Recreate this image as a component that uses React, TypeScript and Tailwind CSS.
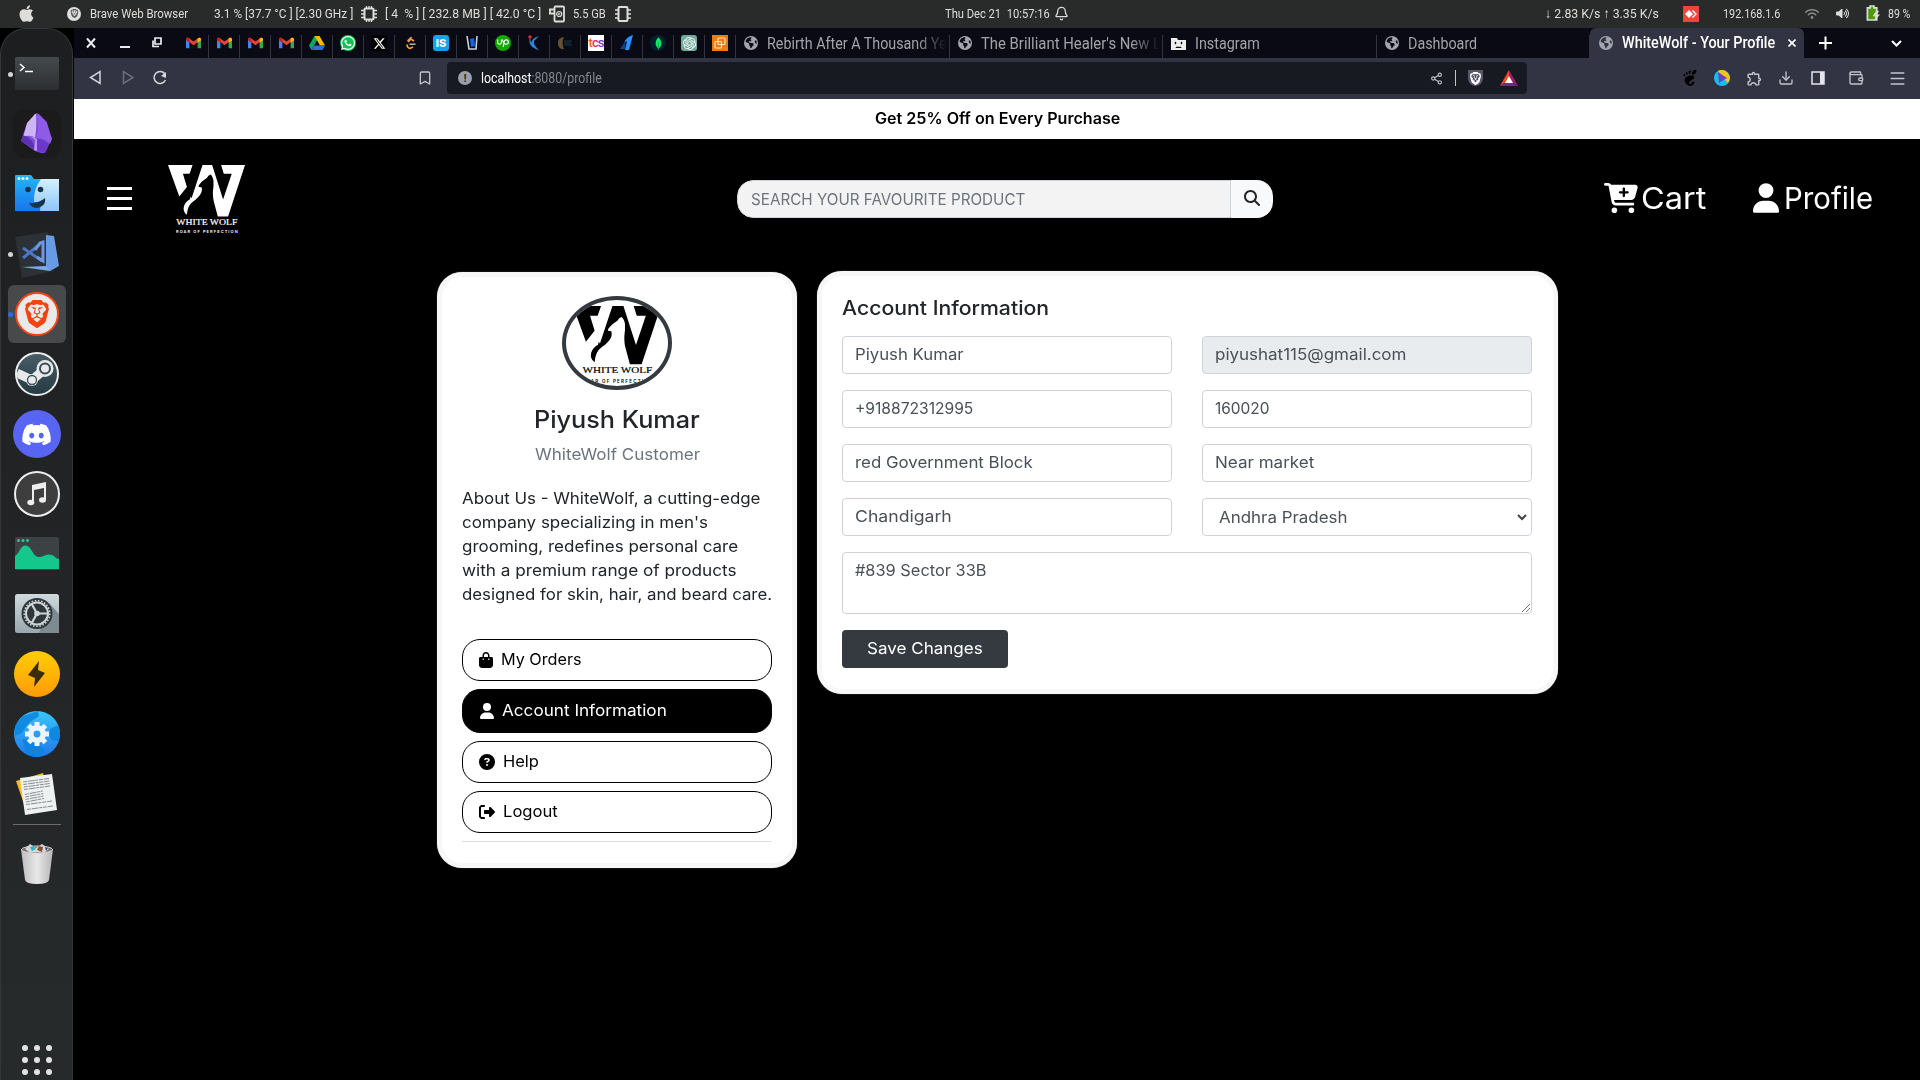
import React, { useLayoutEffect, useRef, useState } from "react";
import {
  FaApple, FaCartPlus, FaUser, FaBagShopping, FaCircleQuestion, FaRightFromBracket,
  FaMagnifyingGlass, FaEarthAmericas, FaWhatsapp, FaDiscord, FaXTwitter, FaUpwork, FaVolumeHigh, FaWifi,
} from "react-icons/fa6";
import { SiBrave, SiMongodb, SiOpenai, SiGnome } from "react-icons/si";
import { MdOutlineExtension } from "react-icons/md";
import { Share2, Download, Wallet, Menu, Bookmark, Bell } from "lucide-react";

type Kids = { children: React.ReactNode };

/* Text condensed or stretched to fill the width of its box. */
function Fit({ children, className = "" }: Kids & { className?: string }) {
  const box = useRef<HTMLSpanElement>(null);
  const text = useRef<HTMLSpanElement>(null);
  const [scale, setScale] = useState(1);
  useLayoutEffect(() => {
    if (box.current && text.current) setScale(box.current.clientWidth / text.current.offsetWidth);
  }, []);
  return (
    <span ref={box} className={`block shrink-0 whitespace-pre ${className}`}>
      <span ref={text} className="block w-max origin-left" style={{ transform: `scaleX(${scale})` }}>{children}</span>
    </span>
  );
}

function WolfLogo({ className = "" }: { className?: string }) {
  return (
    <svg viewBox="293 225 232 208" preserveAspectRatio="none" className={className} fill="currentColor">
      <path d="M293 225H367L358 251H338L350 291L327 320Z" />
      <path d="M397 225H426L459 329L485 251H461L453 225H525L474 380H443L431 335Q426 315 430 290V272Q427 258 421 254Q414 256 410 264Q398 271 390 281Q383 289 386 291L394 292Q398 303 389 316Q380 328 366 337Q352 347 350 375Q337 366 341 349Q345 336 359 328L361 320L364 325Z" />
      <text x="318" y="405" fontSize="23" fontWeight="400" stroke="currentColor" strokeWidth=".5" fontFamily="Liberation Serif, serif" textLength="184" lengthAdjust="spacingAndGlyphs">WHITE WOLF</text>
      <text x="317" y="431" fontSize="12" fontWeight="600" fontFamily="Inter, sans-serif" textLength="186">ROAR OF PERFECTION</text>
    </svg>
  );
}

function Chip({ gpu = false, ram = false }: { gpu?: boolean; ram?: boolean }) {
  return (
    <svg viewBox="0 0 16 18" className="h-[18px] w-4" fill="none" stroke="#deddda" strokeWidth="2">
      {gpu ? (
        <>
          <path d="M5.500 2.500Q5.500 1.500 6.500 1.500H14Q15 1.500 15 2.500V15.500Q15 16.500 14 16.500H6.500Q5.500 16.500 5.500 15.500ZM0 4.500h5M0 8.500h5M1 4v5" strokeWidth="1.800" />
          <circle cx="10.200" cy="9" r="2.500" strokeWidth="1.200" />
          <circle cx="10.200" cy="9" r=".8" strokeWidth="1" />
        </>
      ) : ram ? (
        <>
          <rect x="3.500" y="2" width="9" height="14" rx="1" />
          <path d="M0 5h3M0 9h3M0 13h3M13 5h3M13 9h3M13 13h3" strokeWidth="1.400" />
        </>
      ) : (
        <>
          <rect x="3.500" y="3.500" width="9" height="11" rx="1" />
          <path d="M0 5.500h3M0 9h3M0 12.500h3M13 5.500h3M13 9h3M13 12.500h3M5.500 1v2M8 1v2M10.500 1v2M5.500 15v2M8 15v2M10.500 15v2" strokeWidth="1.300" />
        </>
      )}
    </svg>
  );
}

function SystemBar() {
  return (
    <header className="flex h-7 w-full shrink-0 items-center bg-[#292a2a] pb-px font-[Roboto,sans-serif] text-[13.5px] leading-[27px] text-[#deddda]">
      <FaApple className="ml-[17px] size-[19px]" />
      <span className="ml-[31px] flex size-[14px] items-center justify-center rounded-full bg-[#dedede] text-[#555]"><SiBrave className="size-[9px]" /></span>
      <Fit className="ml-[9px] w-[98px]">Brave Web Browser</Fit>
      <Fit className="ml-[26px] w-[139px]">3.1 % [37.7 °C ] [2.30 GHz ]</Fit>
      <span className="ml-2"><Chip /></span>
      <Fit className="ml-2 w-[156px]">[ 4  % ] [ 232.8 MB ] [ 42.0 °C ]</Fit>
      <span className="ml-2"><Chip gpu /></span>
      <Fit className="ml-2 w-[33px]">5.5 GB</Fit>
      <span className="ml-[9px]"><Chip ram /></span>
      <Fit className="ml-[314px] w-[105px]">Thu Dec 21  10:57:16</Fit>
      <Bell className="ml-[4px] size-[15px]" strokeWidth={2} />
      <Fit className="ml-auto w-[114px]">↓ 2.83 K/s ↑ 3.35 K/s</Fit>
      <svg viewBox="0 0 16 16" className="ml-6 size-4"><path fill="#ef443b" d="M0 0h16v16H0z" /><path fill="#fff" d="m6 4 4 4-4 4-4-4zM10 4l4 4-4 4-1-1 3-3-3-3z" /></svg>
      <Fit className="ml-6 w-[57px]">192.168.1.6</Fit>
      <FaWifi className="ml-[25px] size-[14px] text-[#8d8d8b]" />
      <FaVolumeHigh className="ml-[17px] size-[13px]" />
      <svg viewBox="0 0 15 18" className="ml-[17px] h-[17px] w-[14px]"><path d="M4.500 1h4v2h3v13h-10V3h3z" fill="#4e9a06" stroke="#deddda" strokeWidth="1.800" /><path d="m11 6-4 6h3l-1 5 6-7h-3l2-4z" fill="#deddda" /></svg>
      <Fit className="mr-[10px] ml-2 w-[22px]">89 %</Fit>
    </header>
  );
}

function DockSlot({ children, dot = "", active = false }: Kids & { dot?: string; active?: boolean }) {
  return (
    <div className="relative flex h-[60px] w-full shrink-0 items-center justify-center">
      <div className={`flex size-[58px] items-center justify-center rounded-md ${active ? "bg-[#48494a]" : ""}`}>{children}</div>
      {dot && <span className={`absolute left-[7px] size-[5px] rounded-full ${dot}`} />}
    </div>
  );
}

function Dock() {
  return (
    <nav className="flex w-[73px] shrink-0 flex-col items-center rounded-t-[26px] border border-b-0 border-[#343637] bg-linear-to-b from-[#1d1e1f] via-[#222425] to-[#272a2b] pt-[15px]">
      <DockSlot dot="bg-[#d4d4d4]">
        <svg viewBox="0 0 44 34" className="h-[34px] w-11"><defs><linearGradient id="term" x2="0" y2="1"><stop stopColor="#454a4c" /><stop offset="1" stopColor="#2b2f31" /></linearGradient></defs><rect width="44" height="33" rx="1.500" fill="url(#term)" /><path d="m5 7 4 3.500L5 14M10 14.500h8" stroke="#fff" strokeWidth="1.500" fill="none" /></svg>
      </DockSlot>
      <DockSlot>
        <svg viewBox="0 0 48 48" className="size-12">
          <rect width="48" height="48" rx="11" fill="#1b1b1b" />
          <path d="M22 4Q25 2 28 6L34 12Q34 20 36 25L39 28 33 41Q32 44 28 43L22 41 8 31 13 16Z" fill="#7c4bd2" />
          <path d="M22 4 14 13Q12 21 10 27Q18 24 22 28Q24 17 23 4Z" fill="#cdb4f5" />
          <path d="M23 4Q27 15 23 28Q31 28 37 34L39 29 34 13 27 6Z" fill="#8e5be8" />
          <path d="M10 25Q21 29 22 40L8 31Z" fill="#5d31b5" />
          <path d="M22 29Q30 28 36 34L32 43 21 40Z" fill="#6d38c9" />
          <path d="M10 25Q17 25 22 30L21 40 24 41 24 29Q16 25 10 25Z" fill="#b896ee" />
        </svg>
      </DockSlot>
      <DockSlot>
        <svg viewBox="0 0 44 37" className="-mt-px h-[37px] w-11">
          <defs><linearGradient id="files" x2="0" y2="1"><stop stopColor="#22b6f7" /><stop offset="1" stopColor="#1a74ee" /></linearGradient><linearGradient id="filesR" x2="0" y2="1"><stop stopColor="#d4effd" /><stop offset="1" stopColor="#8cc6fb" /></linearGradient></defs>
          <path d="M0 1Q0 0 1 0H16L19 4H44V36H0Z" fill="url(#files)" />
          <path d="M26 4H44V36H25Q26 31 25 27H19Q18 15 26 4Z" fill="url(#filesR)" />
          <g fill="#e5f6ff"><circle cx="4" cy="3.500" r="1.500" /><circle cx="8" cy="3.500" r="1.500" /><circle cx="12" cy="3.500" r="1.500" /></g>
          <g fill="#17344b"><circle cx="13" cy="14.500" r="2.800" /><circle cx="25.500" cy="14.500" r="2.800" /><path d="M14 28Q23 29 30 23Q31 28 27 31Q22 35 16 31Z" /></g>
        </svg>
      </DockSlot>
      <DockSlot dot="bg-[#d4d4d4]">
        <svg viewBox="0 0 44 47" className="h-[47px] w-11">
          <path d="M0 6 33 1 39 40 7 47Z" fill="#2c3037" />
          <path d="m31 4 8 1 5 30-9 5-4-2Z" fill="#679be3" /><path d="m7 36 24-1 4 5Z" fill="#79a9ea" />
          <path d="M8 17 27 30M8 27 25 13" stroke="#4a77c3" strokeWidth="3" /><path d="M20 19 25 12 28 11V30L22 26" fill="none" stroke="#6a99df" strokeWidth="3" />
        </svg>
      </DockSlot>
      <DockSlot active dot="bg-[#3465f0]">
        <span className="flex size-11 items-center justify-center rounded-full border-[2.5px] border-[#fb4616] bg-[#e9e9e9]"><SiBrave className="size-7 text-[#f5420f]" /></span>
      </DockSlot>
      <DockSlot>
        <span className="flex size-11 items-center justify-center overflow-hidden rounded-full border-2 border-[#eceded] bg-linear-to-b from-[#475c66] to-[#263b44]">
          <svg viewBox="0 0 40 40" className="size-10"><path d="M0 19 15 26 28 15" stroke="#e9e9e9" strokeWidth="9" fill="none" /><circle cx="28" cy="14.500" r="8.500" fill="#e9e9e9" /><circle cx="28" cy="14.500" r="5" fill="#e9e9e9" stroke="#364d58" strokeWidth="2" /><circle cx="15" cy="26" r="6" fill="#e9e9e9" /><circle cx="15" cy="26" r="4.500" fill="none" stroke="#364d58" strokeWidth="1.300" /></svg>
        </span>
      </DockSlot>
      <DockSlot><span className="flex size-12 items-center justify-center rounded-full bg-[#5865f2]"><FaDiscord className="size-[31px] text-white" /></span></DockSlot>
      <DockSlot>
        <span className="flex size-[46px] items-center justify-center rounded-full border-2 border-[#eee] bg-[#3e3e3e]">
          <svg viewBox="0 0 20 24" className="h-6 w-5" fill="#eee"><path d="M5 3 19 0V18H17V6L7 8V20H5Z" /><ellipse cx="3.800" cy="20.500" rx="3.500" ry="2.700" /><ellipse cx="15.500" cy="18" rx="3.500" ry="2.700" /></svg>
        </span>
      </DockSlot>
      <DockSlot>
        <svg viewBox="0 0 44 33" className="-mt-px h-[33px] w-11"><rect width="44" height="33" rx="1.500" fill="#3c4144" /><path d="M0 19C5 16 5 9 10 8.500C17 8 17 20 24 20C29 20 31 16 37 18C40 19 41 22 44 22V32H0Z" fill="#14c78a" /><g fill="#1ad194"><circle cx="3.500" cy="3.500" r="1.500" /><circle cx="8" cy="3.500" r="1.500" /><circle cx="12.500" cy="3.500" r="1.500" /></g></svg>
      </DockSlot>
      <DockSlot>
        <svg viewBox="0 0 44 39" className="-mt-px h-[39px] w-11"><defs><linearGradient id="set" x2="0" y2="1"><stop stopColor="#cfdade" /><stop offset="1" stopColor="#98a7ad" /></linearGradient></defs><rect width="44" height="39" rx="2.500" fill="url(#set)" /><path d="M34 9 44 20V39H24Z" fill="#7e8b91" /><circle cx="22" cy="19.500" r="15.500" fill="#30363a" /><circle cx="22" cy="19.500" r="11" fill="none" stroke="#ccd6d9" strokeWidth="2" /><circle cx="22" cy="19.500" r="12.800" fill="none" stroke="#ccd6d9" strokeWidth="1.600" strokeDasharray="1.600 1.600" /><path d="m22 19.500 10 0M22 19.500l-5-9M22 19.500l-5 9" stroke="#ccd6d9" strokeWidth="2.200" /><circle cx="22" cy="19.500" r="2.800" fill="#ccd6d9" /></svg>
      </DockSlot>
      <DockSlot><span className="flex size-[46px] items-center justify-center rounded-full bg-linear-to-b from-[#ffce05] to-[#ff9a06]"><svg viewBox="0 0 18 26" className="h-[26px] w-[18px]"><path d="M11 0 0 14 7 17 6 26 17 12 10 9Z" fill="#3a2c0a" /></svg></span></DockSlot>
      <DockSlot>
        <svg viewBox="0 0 46 46" className="size-[46px]"><defs><linearGradient id="globe" x2="0" y2="1"><stop stopColor="#39c8fb" /><stop offset="1" stopColor="#1f75ea" /></linearGradient><clipPath id="gc"><circle cx="23" cy="23" r="23" /></clipPath></defs><g clipPath="url(#gc)"><path fill="url(#globe)" d="M0 0h46v46H0z" /><path fill="#0b84dd" d="M1 13 9 5 24 0 25 5 16 11 11 17 8 22 1 25ZM36 18l10-5v18l-8-2-3-5ZM8 28l12 1 11 10-5 7H14Z" opacity=".85" /></g><path d="M20.500 11h5v4h-5zM20.500 31h5v4h-5zM11 20.500h4v5h-4zM31 20.500h4v5h-4z" fill="#eaf6ff" /><path d="M20.500 11h5v4h-5zM20.500 31h5v4h-5zM11 20.500h4v5h-4zM31 20.500h4v5h-4z" fill="#eaf6ff" transform="rotate(45 23 23)" /><circle cx="23" cy="23" r="6.200" fill="none" stroke="#eaf6ff" strokeWidth="5.500" /></svg>
      </DockSlot>
      <DockSlot>
        <svg viewBox="0 0 44 44" className="size-11"><path d="M1 9 28 1 35 30 11 38Z" fill="#f5bd22" /><path d="M5 6 37 2 42 38 10 43Z" fill="#eef1f2" /><g stroke="#7b8185" strokeWidth=".9" strokeDasharray="4 .8 7 .6 3 .7">{[0, 1, 2, 3, 5, 6, 7, 8, 9, 11].map((i) => <path key={i} d={`M${8 + i * 0.35} ${10 + i * 2.5}l${i > 4 && i < 9 ? 18 : 26} -3.500`} />)}</g></svg>
      </DockSlot>
      <div className="h-px w-12 shrink-0 bg-[#6b6d6e]" />
      <svg viewBox="0 0 32 42" className="mt-[18px] h-[42px] w-8 shrink-0"><defs><linearGradient id="bin"><stop stopColor="#bdbdbd" /><stop offset=".5" stopColor="#e8e8e8" /><stop offset="1" stopColor="#b5b5b5" /></linearGradient></defs><path d="M0 6H32L28 37Q27 41 16 41T4 37Z" fill="url(#bin)" /><ellipse cx="16" cy="6.500" rx="15.500" ry="3.500" fill="#706b68" stroke="#d4d4d4" /><path d="m4 6 5-5 6 4 6-4 7 5-4 3H8Z" fill="#d8d9d7" /><path d="m9 4 4-1 2 3-4 2Z" fill="#2fb5c8" /><path d="m18 3 4 1-1 5-5-2Z" fill="#8a4c31" /><path d="m24 4 3 1-2 3Z" fill="#334a77" /></svg>
      <div className="mt-auto mb-[5px] grid grid-cols-3 gap-1.5">
        {Array.from({ length: 9 }, (_, i) => <span key={i} className="size-1.5 rounded-full bg-[#e3e3e3]" />)}
      </div>
    </nav>
  );
}

function Gmail() {
  return <svg viewBox="0 0 16 12" className="h-3 w-[15px]"><path d="M0 2v9.500h3.600V5z" fill="#4285f4" /><path d="M12.400 5v6.500H16V2z" fill="#34a853" /><path d="M0 2.200C0 .3 2 0 3.200.8L8 4.500 12.800.8C14 0 16 .3 16 2.200L8 8.300z" fill="#ea4335" /><path d="M12.400 1.200C14 0 16 .3 16 2.200v1l-3.600 2.600z" fill="#fbbc04" /><path d="M0 2.200C0 .3 2 0 3.600 1.200v4.400L0 3z" fill="#c5221f" /></svg>;
}

const pinned: React.ReactNode[] = [
  <Gmail />, <Gmail />, <Gmail />, <Gmail />,
  <svg viewBox="0 0 16 14" className="h-[14px] w-4"><path d="M5.500 0h5L5 9.500 2.500 14 0 9.500z" fill="#0da960" /><path d="M5.500 0h5L16 9.500h-5z" fill="#ffba00" /><path d="M5 9.500h11L13.500 14h-11z" fill="#2d6fdd" /></svg>,
  <span className="flex size-4 items-center justify-center rounded-full bg-[#12c152]"><FaWhatsapp className="size-4 text-white" /></span>,
  <span className="flex size-4 items-center justify-center bg-black"><FaXTwitter className="size-[13px] text-white" /></span>,
  <svg viewBox="0 0 16 16" className="size-4" fill="none" strokeWidth="1.600"><path d="m9.500 2-4 4" stroke="#b9aaa0" /><path d="M5 9.500q0 3 3 4l3-1.500M6 7l3-3 3 2" stroke="#ffa116" /><path d="M7.500 9.200h6" stroke="#aaa" /></svg>,
  <span className="flex size-4 items-center justify-center rounded-[3px] bg-[#0ea5e9] font-[Inter,sans-serif] text-[11px] font-extrabold text-white">IS</span>,
  <svg viewBox="0 0 16 16" className="size-4"><path d="m3 1 2 13h7l1-13" fill="none" stroke="#c9d2e1" strokeWidth="1.600" /><path d="m6 4 4-1 1 8-4 1z" fill="#1264ee" /></svg>,
  <span className="flex size-4 items-center justify-center rounded-full bg-[#14a800]"><FaUpwork className="size-3 text-white" /></span>,
  <svg viewBox="0 0 16 16" className="size-4"><path d="M4 2Q1 12 13 15 7 10 8 6L13 1Q6 3 5 8" fill="#2c87d7" /><circle cx="4" cy="2" r="1.700" fill="#e42a2a" /></svg>,
  <svg viewBox="0 0 16 16" className="size-4"><path d="M7 2Q0 3 1 9T7 14Q4 8 7 2" fill="#695033" /><path d="M7 6h8M7 8h7M7 10h8" stroke="#123847" /></svg>,
  <span className="flex size-4 items-center justify-center bg-white font-[Roboto,sans-serif] text-[13px] leading-4 font-medium tracking-[-1px] text-[#d92d6e]"><i className="not-italic text-[#f15a24]">t</i>c<i className="not-italic text-[#753bbd]">s</i></span>,
  <svg viewBox="0 0 16 16" className="size-4"><path d="M14 0 10 15H6L8 6 5 8Q7 2 14 0Z" fill="#2893ff" /><path d="M6 7 1 14h5z" fill="#17427e" /></svg>,
  <span className="flex size-4 items-center justify-center rounded-full bg-[#04202c]"><SiMongodb className="size-[13px] text-[#00ed64]" /></span>,
  <span className="flex size-4 items-center justify-center rounded-[3px] bg-[#74aa9c]"><SiOpenai className="size-[13px] text-white" /></span>,
  <svg viewBox="0 0 16 16" className="size-4"><path fill="#ee7c0d" d="M0 0h16v16H0z" /><rect x="6" y="3" width="7" height="6.500" rx="1" fill="none" stroke="#ffe2bd" strokeWidth="1.200" /><rect x="3" y="6.500" width="6.500" height="6.500" rx="1" fill="none" stroke="#ffe2bd" strokeWidth="1.200" /></svg>,
];

function Tab({ title, width, sad = false, fade = false }: { title: string; width: string; sad?: boolean; fade?: boolean }) {
  return (
    <div className="flex h-[23px] w-[213.500px] shrink-0 border-r border-[#33343c]">
      <div className={`flex h-4 flex-1 items-center pl-2 ${fade ? "mask-r-from-85% mask-r-to-99%" : ""}`}>
        {sad ? (
          <svg viewBox="0 0 15 13" className="h-[13px] w-[15px]"><path d="M0 1h6l1 2h8v10H0z" fill="#eee" /><path d="M4 5h1v2H4zM10 5h1v2h-1zM5 11V10h5v1" fill="#111" stroke="#111" strokeWidth=".5" /></svg>
        ) : <FaEarthAmericas className="size-[14px] text-[#a3a5ad]" />}
        <Fit className={`ml-[9px] text-[17px] leading-[18px] text-[#a3a4aa] ${width}`}>{title}</Fit>
      </div>
    </div>
  );
}

function BrowserChrome() {
  return (
    <div className="shrink-0 font-[Roboto,sans-serif]">
      <div className="flex h-[30px] items-end bg-[#0a0a14]">
        <svg viewBox="0 0 104 30" className="h-[30px] w-[104px] shrink-0" fill="none" stroke="#ececf0" strokeWidth="2"><path d="m13 10.500 8 9M21 10.500l-8 9M46 19h10" /><path d="M81 10h6v6h-6zM79 12.500v6h6" strokeWidth="1.700" /></svg>
        {pinned.map((icon, i) => <div key={i} className="flex h-[23px] w-[31px] shrink-0 items-center justify-center border-r border-[#33343c] pb-[7px]"><div className="flex h-4 items-center">{icon}</div></div>)}
        <Tab title="Rebirth After A Thousand Ye" width="w-[180px]" fade />
        <Tab title="The Brilliant Healer's New L" width="w-[180px]" fade />
        <Tab title="Instagram" width="w-[65px]" sad />
        <Tab title="Dashboard" width="w-[69px]" />
        <div className="flex h-[30px] w-[214px] shrink-0 items-center rounded-t-md bg-[#323443] pl-[9px]">
          <FaEarthAmericas className="size-[14px] text-[#a3a5ad]" />
          <Fit className="ml-[9px] w-[153px] text-[17px] font-medium text-white">WhiteWolf - Your Profile</Fit>
          <svg viewBox="0 0 8 8" className="ml-[13px] size-2" stroke="#fff" strokeWidth="1.600"><path d="m.5.5 7 7M7.500.5l-7 7" /></svg>
        </div>
        <svg viewBox="0 0 116 30" className="h-[30px] w-[116px] shrink-0" fill="none" stroke="#fff" strokeWidth="2"><path d="M15 15h13M21.500 8.500v13M88 13l4.500 4.500L97 13" /></svg>
      </div>
      <div className="flex h-[41px] items-center bg-[#323443] pb-px text-[#c3c4cb]">
        <svg viewBox="0 0 104 30" className="h-[30px] w-[104px] shrink-0" fill="none" stroke="#d5d6dc" strokeWidth="1.500"><path d="M26 8.500v12L16.500 14.500Z" /><path d="M49.500 8.500v12l9.500-6Z" stroke="#6d6e7a" /><path d="M91 11a6 6 0 1 0 .5 6" /><path d="M92 9v6l-5-2z" fill="#d5d6dc" stroke="none" /></svg>
        <Bookmark className="ml-[239px] size-[16px]" strokeWidth={2} />
        <div className="ml-[14px] flex h-8 w-[1080px] items-center rounded-[4px] bg-[#181a22] pl-[11px]">
          <span className="flex size-[14px] items-center justify-center rounded-full bg-[#9b9da7] text-[10px] font-bold text-[#181a22]">!</span>
          <Fit className="ml-[9px] w-[121px] text-[15.5px] leading-8 text-[#85868f]"><span className="text-white">localhost</span>:8080/profile</Fit>
          <Share2 className="ml-auto size-[13px]" strokeWidth={2} />
          <span className="ml-3 h-4 w-px bg-[#c3c4cb]" />
          <span className="ml-[12px] flex h-4 w-[15px] items-center justify-center rounded-b-lg bg-[#575869]"><SiBrave className="size-[13px] text-white" /></span>
          <svg viewBox="0 0 18 16" className="mr-[9px] ml-[17px] h-4 w-[18px]"><path d="M9 0 0 16 9 10Z" fill="#ff4724" /><path d="m9 0 9 16-9-6Z" fill="#9e1f63" /><path d="M0 16h18L9 10Z" fill="#662d91" /><path d="m9 6 4 7H5Z" fill="#fff" /></svg>
        </div>
        <SiGnome className="ml-[155px] size-4 text-black" />
        <svg viewBox="0 0 16 16" className="ml-4 size-4"><circle cx="8" cy="8" r="8" fill="#18bcf2" /><path d="M4 1a8 8 0 0 1 10 12l-5-5Z" fill="#ffc20e" /><path d="M4 2 13 8 5 13Z" fill="#6547bd" /></svg>
        <MdOutlineExtension className="ml-4 size-[17px]" />
        <Download className="ml-[15px] size-4" strokeWidth={2} />
        <svg viewBox="0 0 14 14" className="ml-[17px] size-[14px]"><path d="M1 1h12v12H1z" fill="none" stroke="#e5e5ea" strokeWidth="1.500" /><path d="M9 1h4v12H9z" fill="#e5e5ea" /></svg>
        <Wallet className="ml-[23px] size-4" strokeWidth={2} />
        <Menu className="ml-[24px] size-[19px]" strokeWidth={1.8} />
      </div>
    </div>
  );
}

function SiteHeader() {
  return (
    <>
      <div className="flex h-10 shrink-0 justify-center bg-white pt-2 text-[15.5px] leading-[23px] font-semibold text-black"><Fit className="w-[245px]">Get 25% Off on Every Purchase</Fit></div>
      <div className="flex h-[132px] shrink-0 items-start text-white">
        <div className="mt-12 ml-[33px] flex w-[25px] flex-col gap-[7px]"><i className="h-[3px] bg-white" /><i className="h-[3px] bg-white" /><i className="h-[3px] bg-white" /></div>
        <WolfLogo className="mt-[26px] ml-9 h-[69px] w-[77px]" />
        <div className="mt-[41px] ml-[492px] flex h-[38px] w-[536px] overflow-hidden rounded-2xl">
          <div className="w-[494px] rounded-l-2xl border border-[#ced4da] bg-[#f3f3f3] pl-[13px] text-base leading-9 text-[#6c757d]"><Fit className="w-[274px]">SEARCH YOUR FAVOURITE PRODUCT</Fit></div>
          <div className="flex flex-1 justify-center bg-[#f8f9fa] pt-[10px] text-[#212529]"><FaMagnifyingGlass className="size-4" /></div>
        </div>
        <div className="mt-[41px] ml-[331px] flex items-center text-[30px] leading-[36px]">
          <FaCartPlus className="size-[34px]" /><Fit className="ml-[3px] w-[65px]">Cart</Fit>
          <FaUser className="ml-[47px] h-[30px] w-[26px]" /><Fit className="ml-[5px] w-[89px]">Profile</Fit>
        </div>
      </div>
    </>
  );
}

const about: [string, string][] = [
  ["About Us - WhiteWolf, a cutting-edge", "w-[299px]"],
  ["company specializing in men's", "w-[246px]"],
  ["grooming, redefines personal care", "w-[276px]"],
  ["with a premium range of products", "w-[275px]"],
  ["designed for skin, hair, and beard care.", "w-[310px]"],
];

function MenuItem({ icon, label, width, active = false }: { icon: React.ReactNode; label: string; width: string; active?: boolean }) {
  return (
    <div className={`flex items-center rounded-[18px] border border-black pl-4 leading-6 ${active ? "h-11 bg-black text-white" : "h-[42px] text-black"}`}>
      {icon}<Fit className={`${width} -mt-[2px]`}>{label}</Fit>
    </div>
  );
}

function ProfileCard() {
  return (
    <section className="mt-px flex h-[596px] w-[360px] shrink-0 flex-col rounded-[25px] border-[5px] border-[#f7f7f7] bg-white px-5 pt-[19px] text-[#212529] shadow-[0_0_1px_#aaa]">
      <div className="flex h-[94px] w-[110px] shrink-0 justify-center self-center overflow-hidden rounded-[50%] border-4 border-[#343a40] pt-[6px] text-black"><WolfLogo className="h-[78px] w-[88px] shrink-0" /></div>
      <Fit className="mt-[15px] w-[166px] self-center text-2xl leading-[29px] font-medium">Piyush Kumar</Fit>
      <Fit className="mt-2 w-[165px] self-center text-[#6c757d]">WhiteWolf Customer</Fit>
      <div className="mt-5 leading-6">{about.map(([line, w]) => <Fit key={line} className={w}>{line}</Fit>)}</div>
      <div className="mt-[33px] flex flex-col gap-2">
        <MenuItem icon={<FaBagShopping className="mr-2 h-4 w-[14px]" />} label="My Orders" width="w-[81px]" />
        <MenuItem active icon={<FaUser className="mr-2 ml-px h-4 w-[14px]" />} label="Account Information" width="w-[165px]" />
        <MenuItem icon={<FaCircleQuestion className="mr-2 size-4" />} label="Help" width="w-[36px]" />
        <MenuItem icon={<FaRightFromBracket className="mr-2 size-4" />} label="Logout" width="w-[55px]" />
        <div className="h-px bg-[#e0e0e0]" />
      </div>
    </section>
  );
}

function Field({ value, width, disabled = false }: { value: string; width: string; disabled?: boolean }) {
  return <div className={`h-[38px] rounded-[4px] border border-[#ced4da] pt-[5px] pl-3 ${disabled ? "bg-[#e9ecef]" : "bg-white"}`}><Fit className={width}>{value}</Fit></div>;
}

function AccountForm() {
  return (
    <section className="h-[423px] w-[741px] shrink-0 rounded-[25px] border-[5px] border-[#f7f7f7] bg-white px-5 pt-5 text-[#495057] shadow-[0_0_1px_#aaa]">
      <Fit className="w-[207px] text-xl leading-6 font-medium text-[#212529]">Account Information</Fit>
      <div className="mt-4 grid w-[690px] grid-cols-2 gap-x-[30px] gap-y-4">
        <Field value="Piyush Kumar" width="w-[109px]" />
        <Field value="piyushat115@gmail.com" width="w-[191px]" disabled />
        <Field value="+918872312995" width="w-[118px]" />
        <Field value="160020" width="w-[54px]" />
        <Field value="red Government Block" width="w-[178px]" />
        <Field value="Near market" width="w-[99px]" />
        <Field value="Chandigarh" width="w-[97px]" />
        <div className="flex h-[38px] items-start justify-between rounded-[4px] border border-[#ced4da] pt-[6px] pr-1 pl-4"><Fit className="w-[129px]">Andhra Pradesh</Fit><svg viewBox="0 0 10 7" className="mt-[9px] h-[7px] w-[10px]" fill="none" stroke="#3d444a" strokeWidth="2"><path d="m1 1 4 4 4-4" /></svg></div>
        <div className="col-span-2 flex h-[62px] items-start justify-between rounded-[4px] border border-[#ced4da] pt-[5px] pl-3"><Fit className="w-[132px]">#839 Sector 33B</Fit><svg viewBox="0 0 8 8" className="mr-px mb-px size-2 self-end" stroke="#555" strokeWidth=".8"><path d="M0 8 8 0M4 8l4-4" /></svg></div>
      </div>
      <div className="mt-4 h-[38px] w-[166px] rounded-[4px] bg-[#343a40] pt-[6px] pl-[25px] text-white"><Fit className="w-[116px]">Save Changes</Fit></div>
    </section>
  );
}

export default function App() {
  return (
    <div className="flex h-[1080px] w-[1920px] flex-col overflow-hidden bg-black">
      <SystemBar />
      <div className="flex min-h-0 flex-1">
        <Dock />
        <div className="ml-px flex min-w-0 flex-1 flex-col">
          <BrowserChrome />
          <main className="flex flex-1 flex-col bg-black font-[Inter,sans-serif] text-base leading-6">
            <SiteHeader />
            <div className="flex items-start gap-5 pl-[363px]"><ProfileCard /><AccountForm /></div>
          </main>
        </div>
      </div>
    </div>
  );
}
